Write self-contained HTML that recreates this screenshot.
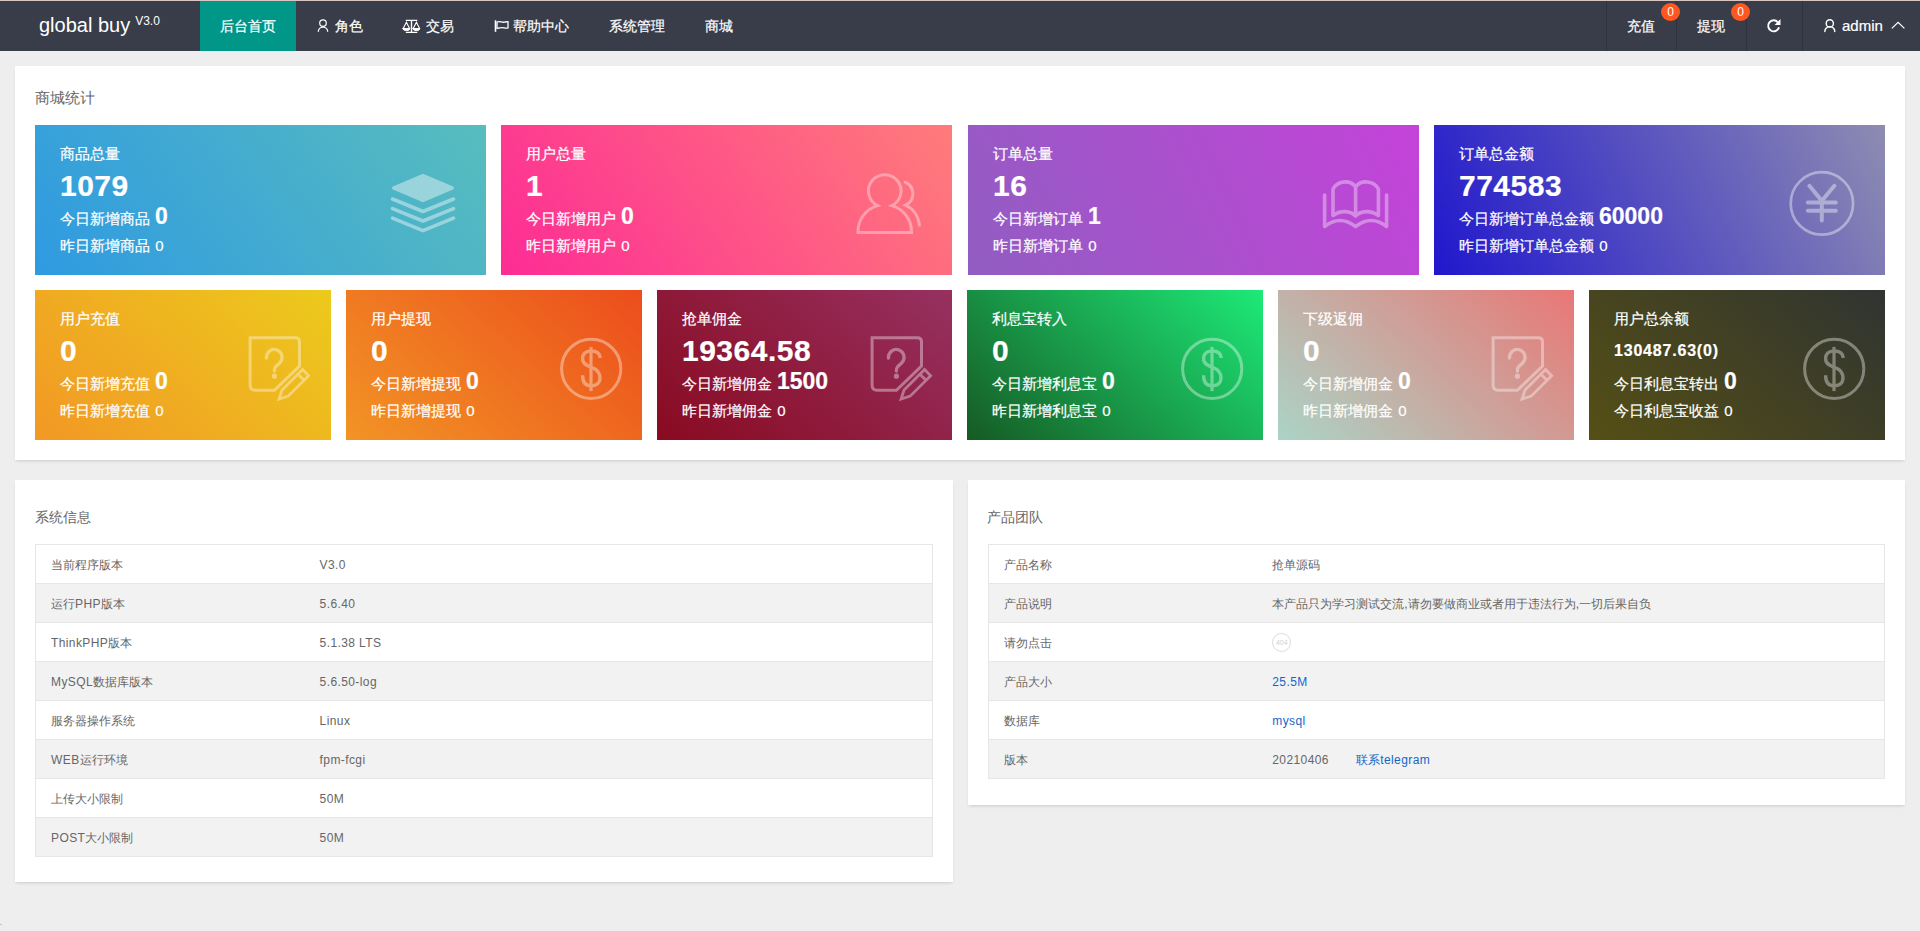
<!DOCTYPE html>
<html><head><meta charset="utf-8">
<style>
*{margin:0;padding:0;box-sizing:border-box}
html,body{width:1920px;height:931px;overflow:hidden}
body{background:#eeeeee;font-family:"Liberation Sans",sans-serif;position:relative;color:#666}
.a{position:absolute;white-space:nowrap}
#topline{left:0;top:0;width:1920px;height:1px;background:#d9c6c2}
#hdr{left:0;top:1px;width:1920px;height:50px;background:#393d49}
.logo{left:39px;top:13px;font-size:20px;line-height:24px;color:#fff}
.logo sup{font-size:12px;position:relative;top:-7px;vertical-align:baseline;margin-left:5px}
.nav{color:#fff;font-size:14px;line-height:20px;top:16px;-webkit-text-stroke:0.2px #fff}
.navact{left:200px;top:1px;width:96px;height:50px;background:#009688}
.sep{top:1px;width:1px;height:50px;background:#2f333d}
.badge{width:19px;height:18px;border-radius:50%;background:#ff5722;color:#fff;font-size:12px;line-height:18px;text-align:center;top:3px}
.panel{background:#fff;box-shadow:0 2px 3px -1px rgba(0,0,0,.15)}
.ptitle{font-size:15px;line-height:20px;color:#666}
.card{color:#fff;overflow:hidden;-webkit-text-stroke:0.2px #fff}
.card .t{position:absolute;left:25px;top:20px;font-size:15px;line-height:18px;white-space:nowrap}
.card .n{position:absolute;left:25px;top:46px;font-size:30px;font-weight:bold;line-height:30px;letter-spacing:0.5px;white-space:nowrap}
.card .l1{position:absolute;left:25px;top:81px;font-size:15px;line-height:20px;white-space:nowrap}
.card .l1 b{font-size:23px;line-height:20px;margin-left:5px}
.card .l2{position:absolute;left:25px;top:112px;word-spacing:1px;font-size:15px;line-height:18px;white-space:nowrap}
.card svg{position:absolute}
table{border-collapse:collapse;width:100%}
.tbl{border:1px solid #e6e6e6}
.tbl td{height:39px;border-bottom:1px solid #e6e6e6;font-size:12px;color:#666;padding:2px 15px 0;line-height:20px}
.tbl tr:nth-child(even) td{background:#f2f2f2}
.tbl tr:last-child td{border-bottom:none}
.tbl td.c1{width:30%}
.tbl td.blue,.tbl .blue{color:#1366c9}
.L{letter-spacing:0.4px}
</style></head><body>
<div class="a" id="topline"></div>
<div class="a" style="left:0;top:924px;width:2px;height:1px;background:#c4c4c4"></div>
<div class="a" id="hdr"></div>
<div class="a logo">global buy<sup>V3.0</sup></div>
<div class="a navact"></div>
<div class="a nav" style="left:220px">后台首页</div>
<div class="a nav" style="left:335px">角色</div>
<div class="a nav" style="left:426px">交易</div>
<div class="a nav" style="left:513px">帮助中心</div>
<div class="a nav" style="left:609px">系统管理</div>
<div class="a nav" style="left:705px">商城</div>

<div class="a sep" style="left:1606px"></div>
<div class="a sep" style="left:1676px"></div>
<div class="a sep" style="left:1746px"></div>
<div class="a sep" style="left:1802px"></div>
<div class="a nav" style="left:1627px;top:16px">充值</div>
<div class="a nav" style="left:1697px;top:16px">提现</div>
<div class="a badge" style="left:1661px">0</div>
<div class="a badge" style="left:1731px">0</div>
<div class="a nav" style="left:1842px;top:16px;font-size:15px">admin</div>

<!-- panel 1 -->
<div class="a panel" style="left:15px;top:66px;width:1890px;height:394px"></div>
<div class="a ptitle" style="left:35px;top:88px">商城统计</div>

<div class="a card" style="left:35px;top:125px;width:451px;height:150px;background:linear-gradient(55deg,#2f9ae1,#58bdbe)">
 <div class="t">商品总量</div><div class="n">1079</div>
 <div class="l1">今日新增商品<b>0</b></div><div class="l2">昨日新增商品 0</div>
</div>
<div class="a card" style="left:501px;top:125px;width:451px;height:150px;background:linear-gradient(55deg,#fd2c95,#ff7c7a)">
 <div class="t">用户总量</div><div class="n">1</div>
 <div class="l1">今日新增用户<b>0</b></div><div class="l2">昨日新增用户 0</div>
</div>
<div class="a card" style="left:968px;top:125px;width:451px;height:150px;background:linear-gradient(64deg,#915dc2,#c443d9)">
 <div class="t">订单总量</div><div class="n">16</div>
 <div class="l1">今日新增订单<b>1</b></div><div class="l2">昨日新增订单 0</div>
</div>
<div class="a card" style="left:1434px;top:125px;width:451px;height:150px;background:linear-gradient(64deg,#2017cd,#8e8cb2)">
 <div class="t">订单总金额</div><div class="n">774583</div>
 <div class="l1">今日新增订单总金额<b>60000</b></div><div class="l2">昨日新增订单总金额 0</div>
</div>

<div class="a card" style="left:35px;top:290px;width:296px;height:150px;background:linear-gradient(42deg,#f29825,#ecca1c)">
 <div class="t">用户充值</div><div class="n">0</div>
 <div class="l1">今日新增充值<b>0</b></div><div class="l2">昨日新增充值 0</div>
</div>
<div class="a card" style="left:346px;top:290px;width:296px;height:150px;background:linear-gradient(42deg,#f29425,#ec4d1c)">
 <div class="t">用户提现</div><div class="n">0</div>
 <div class="l1">今日新增提现<b>0</b></div><div class="l2">昨日新增提现 0</div>
</div>
<div class="a card" style="left:657px;top:290px;width:295px;height:150px;background:linear-gradient(42deg,#890a20,#963161)">
 <div class="t">抢单佣金</div><div class="n">19364.58</div>
 <div class="l1">今日新增佣金<b>1500</b></div><div class="l2">昨日新增佣金 0</div>
</div>
<div class="a card" style="left:967px;top:290px;width:296px;height:150px;background:linear-gradient(42deg,#165a24,#1dea78)">
 <div class="t">利息宝转入</div><div class="n">0</div>
 <div class="l1">今日新增利息宝<b>0</b></div><div class="l2">昨日新增利息宝 0</div>
</div>
<div class="a card" style="left:1278px;top:290px;width:296px;height:150px;background:linear-gradient(42deg,#abd4c6,#e97775)">
 <div class="t">下级返佣</div><div class="n">0</div>
 <div class="l1">今日新增佣金<b>0</b></div><div class="l2">昨日新增佣金 0</div>
</div>
<div class="a card" style="left:1589px;top:290px;width:296px;height:150px;background:linear-gradient(42deg,#554f15,#303431)">
 <div class="t">用户总余额</div><div class="n" style="font-size:16px;letter-spacing:0.8px">130487.63(0)</div>
 <div class="l1">今日利息宝转出<b>0</b></div><div class="l2">今日利息宝收益 0</div>
</div>

<!-- panel 2 -->
<div class="a panel" style="left:15px;top:480px;width:938px;height:402px"></div>
<div class="a ptitle" style="left:35px;top:507px;font-size:14px">系统信息</div>
<div class="a" style="left:35px;top:544px;width:898px">
<table class="tbl">
<tr><td class="c1">当前程序版本</td><td><span class="L">V3.0</span></td></tr>
<tr><td class="c1">运行<span class="L">PHP</span>版本</td><td><span class="L">5.6.40</span></td></tr>
<tr><td class="c1"><span class="L">ThinkPHP</span>版本</td><td><span class="L">5.1.38 LTS</span></td></tr>
<tr><td class="c1"><span class="L">MySQL</span>数据库版本</td><td><span class="L">5.6.50-log</span></td></tr>
<tr><td class="c1">服务器操作系统</td><td><span class="L">Linux</span></td></tr>
<tr><td class="c1"><span class="L">WEB</span>运行环境</td><td><span class="L">fpm-fcgi</span></td></tr>
<tr><td class="c1">上传大小限制</td><td><span class="L">50M</span></td></tr>
<tr><td class="c1"><span class="L">POST</span>大小限制</td><td><span class="L">50M</span></td></tr>
</table></div>

<!-- panel 3 -->
<div class="a panel" style="left:968px;top:480px;width:937px;height:325px"></div>
<div class="a ptitle" style="left:987px;top:507px;font-size:14px">产品团队</div>
<div class="a" style="left:988px;top:544px;width:897px">
<table class="tbl">
<tr><td class="c1">产品名称</td><td>抢单源码</td></tr>
<tr><td class="c1">产品说明</td><td>本产品只为学习测试交流,请勿要做商业或者用于违法行为,一切后果自负</td></tr>
<tr><td class="c1">请勿点击</td><td><span style="display:inline-block;width:19px;height:19px;border:1px solid #dcdcdc;border-radius:50%;font-size:7px;line-height:17px;text-align:center;color:#cfcfcf;vertical-align:middle;position:relative;top:-1px">404</span></td></tr>
<tr><td class="c1">产品大小</td><td class="blue"><span class="L">25.5M</span></td></tr>
<tr><td class="c1">数据库</td><td class="blue"><span class="L">mysql</span></td></tr>
<tr><td class="c1">版本</td><td><span class="L">20210406</span> <span class="blue" style="margin-left:24px">联系<span class="L">telegram</span></span></td></tr>
</table></div>
<svg class="a" style="left:0;top:0" width="1920" height="931" viewBox="0 0 1920 931" fill="none" stroke="#fff">
<!-- header icons -->
<g stroke-width="1.4" stroke-linecap="round">
 <circle cx="323" cy="23.1" r="3.3" stroke-width="1.2"/>
 <path d="M318.3 31.8 A4.7 4.7 0 0 1 327.7 31.8" stroke-width="1.3" stroke-linecap="butt"/>
 <path d="M405.8 20.4 H417.3 M405.8 32.4 H417.3 M411.5 20.4 V32.4" stroke-linecap="butt"/>
 <path d="M403.2 28.6 L406.4 22.3 L409.6 28.6 M413.2 28.6 L416.4 22.3 L419.6 28.6" stroke-width="1.1"/>
 <path d="M403 28.6 H409.8 A3.4 2 0 0 1 403 28.6 Z M413 28.6 H419.8 A3.4 2 0 0 1 413 28.6 Z" fill="#fff" stroke-width="1"/>
 <path d="M495.5 20.3 V31.8" stroke-linecap="butt" stroke-width="1.6"/>
 <path d="M497 22 C500 20.5 502 23.2 505 22 L508 21.7 V28 C505 29 502.5 26.5 499.5 28 L497 28.3 Z" stroke-width="1.3"/>
 <path d="M1777.9 22.3 A5.5 5.5 0 1 0 1779 27.2" stroke-width="1.9" stroke-linecap="butt"/>
 <path d="M1780.5 18.9 V24.9 H1774.6 Z" fill="#fff" stroke="none"/>
 <circle cx="1829.8" cy="23.4" r="3.6"/>
 <path d="M1824.8 31.6 A5 5 0 0 1 1834.8 31.6"/>
 <path d="M1891.8 28.4 L1898.1 22.4 L1904.4 28.4" stroke-width="1.3" stroke-linecap="butt"/>
</g>
<!-- row1 icons -->
<g opacity="0.42">
 <path d="M393.5 188 L423 175.5 L452.5 188 L423 200.5 Z" fill="#fff" stroke-width="3" stroke-linejoin="round"/>
 <path d="M392.5 199 L423 211.5 L453.5 199 M392.5 208.6 L423 221 L453.5 208.6 M392.5 218.1 L423 230.6 L453.5 218.1" stroke-width="3.6" stroke-linecap="round" stroke-linejoin="round"/>
</g>
<g opacity="0.36" stroke-width="3">
 <path d="M877.6 205.6 A16.3 16.3 0 1 1 891.9 205.6 A27 27 0 0 1 911.5 232.4 L858 232.4 A27 27 0 0 1 877.6 205.6 Z" stroke-linejoin="miter" stroke-miterlimit="10"/>
 <path d="M905.2 182.2 A12.6 12.6 0 0 1 905.6 205.2 A24.5 24.5 0 0 1 919.4 225.2" stroke-linecap="round"/>
</g>
<g opacity="0.36" stroke-width="3.6" stroke-linecap="round" stroke-linejoin="round">
 <path d="M1324.6 195 V226.5 Q1340 214.5 1355.6 226.5 Q1371.2 214.5 1386.6 226.5 V195"/>
 <path d="M1333 215.5 V189 C1337 181 1350 179 1355.6 187 C1361.2 179 1374.4 181 1378.4 189 V215.5 C1371 210 1361 210.5 1355.6 216 C1350.2 210.5 1340.4 210 1333 215.5 Z M1355.6 187 V216"/>
</g>
<g opacity="0.4" stroke-linecap="round">
 <circle cx="1821.9" cy="203.4" r="31.2" stroke-width="2.7"/>
 <path d="M1809.4 185.8 L1821.8 200.8 L1834.4 185.8 M1807.8 202.5 H1835.8 M1807.8 210.7 H1835.8 M1821.8 200.8 V220.6" stroke-width="4"/>
</g>


<g opacity="0.38">
<g transform="translate(35 290)" stroke-width="3">
  <path d="M215.1 47.7 H260.5 Q264.5 47.7 264.5 51.7 V76 L239.4 100.3 H220.1 Q215.1 100.3 215.1 95.3 Z" stroke-linejoin="miter"/>
  <path d="M231.5 68 A7.8 7.8 0 1 1 244.6 73 L240.6 76.8 Q239.4 78 239.4 80 V81" stroke-width="3.3" stroke-linecap="round"/>
  <circle cx="239.4" cy="86.2" r="2.6" fill="#fff" stroke="none"/>
  <g transform="translate(270.6 82.6) rotate(135)">
   <path d="M0 -4.3 H29 L37.5 0 L29 4.3 H0 Z M6.5 -4.3 V4.3" stroke-width="2.8" stroke-linejoin="miter"/>
  </g>
 </g>
<g transform="translate(657 290)" stroke-width="3">
  <path d="M215.1 47.7 H260.5 Q264.5 47.7 264.5 51.7 V76 L239.4 100.3 H220.1 Q215.1 100.3 215.1 95.3 Z" stroke-linejoin="miter"/>
  <path d="M231.5 68 A7.8 7.8 0 1 1 244.6 73 L240.6 76.8 Q239.4 78 239.4 80 V81" stroke-width="3.3" stroke-linecap="round"/>
  <circle cx="239.4" cy="86.2" r="2.6" fill="#fff" stroke="none"/>
  <g transform="translate(270.6 82.6) rotate(135)">
   <path d="M0 -4.3 H29 L37.5 0 L29 4.3 H0 Z M6.5 -4.3 V4.3" stroke-width="2.8" stroke-linejoin="miter"/>
  </g>
 </g>
<g transform="translate(1278 290)" stroke-width="3">
  <path d="M215.1 47.7 H260.5 Q264.5 47.7 264.5 51.7 V76 L239.4 100.3 H220.1 Q215.1 100.3 215.1 95.3 Z" stroke-linejoin="miter"/>
  <path d="M231.5 68 A7.8 7.8 0 1 1 244.6 73 L240.6 76.8 Q239.4 78 239.4 80 V81" stroke-width="3.3" stroke-linecap="round"/>
  <circle cx="239.4" cy="86.2" r="2.6" fill="#fff" stroke="none"/>
  <g transform="translate(270.6 82.6) rotate(135)">
   <path d="M0 -4.3 H29 L37.5 0 L29 4.3 H0 Z M6.5 -4.3 V4.3" stroke-width="2.8" stroke-linejoin="miter"/>
  </g>
 </g>
<g transform="translate(346 290)">
  <circle cx="245.2" cy="78.8" r="29.6" stroke-width="3"/>
  <path d="M254.2 68 C254 62.5 250 61 245 61 C239.5 61 236.6 64 236.6 68.5 C236.6 74 241 75.8 245.5 77.3 C251 79.2 254 82 254 87.8 C254 93.5 250 95.8 245 95.8 C239.5 95.8 236.6 92.2 236.6 85.3" stroke-width="3.4"/>
  <path d="M245 56.9 V101.1" stroke-width="3.2"/>
 </g>
<g transform="translate(967 290)">
  <circle cx="245.2" cy="78.8" r="29.6" stroke-width="3"/>
  <path d="M254.2 68 C254 62.5 250 61 245 61 C239.5 61 236.6 64 236.6 68.5 C236.6 74 241 75.8 245.5 77.3 C251 79.2 254 82 254 87.8 C254 93.5 250 95.8 245 95.8 C239.5 95.8 236.6 92.2 236.6 85.3" stroke-width="3.4"/>
  <path d="M245 56.9 V101.1" stroke-width="3.2"/>
 </g>
<g transform="translate(1589 290)">
  <circle cx="245.2" cy="78.8" r="29.6" stroke-width="3"/>
  <path d="M254.2 68 C254 62.5 250 61 245 61 C239.5 61 236.6 64 236.6 68.5 C236.6 74 241 75.8 245.5 77.3 C251 79.2 254 82 254 87.8 C254 93.5 250 95.8 245 95.8 C239.5 95.8 236.6 92.2 236.6 85.3" stroke-width="3.4"/>
  <path d="M245 56.9 V101.1" stroke-width="3.2"/>
 </g>
</g>
</svg>
</body></html>
